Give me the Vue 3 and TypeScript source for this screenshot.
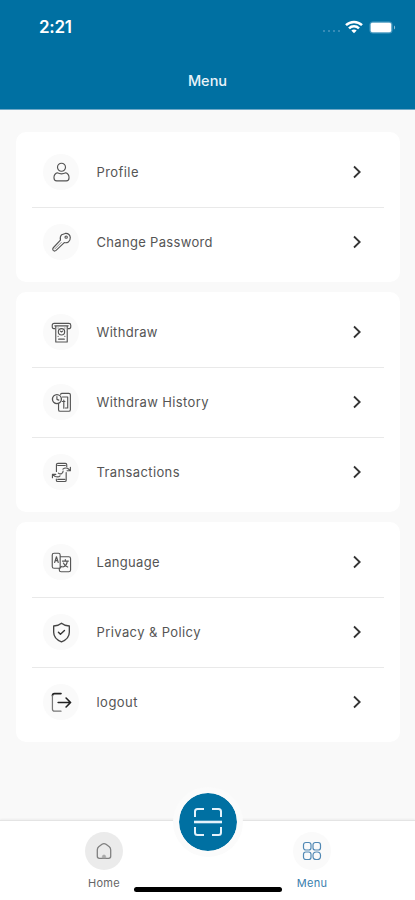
<script setup lang="ts">
interface MenuItem {
  label: string
  icon: string
  width: number
}

const groups: MenuItem[][] = [
  [
    { label: 'Profile', icon: 'profile', width: 42 },
    { label: 'Change Password', icon: 'key', width: 116 },
  ],
  [
    { label: 'Withdraw', icon: 'withdraw', width: 61 },
    { label: 'Withdraw History', icon: 'history', width: 112 },
    { label: 'Transactions', icon: 'transactions', width: 83 },
  ],
  [
    { label: 'Language', icon: 'language', width: 63 },
    { label: 'Privacy & Policy', icon: 'shield', width: 104 },
    { label: 'logout', icon: 'logout', width: 41 },
  ],
]
</script>

<template>
  <div class="screen">
    <header class="header">
      <div class="status">
        <span class="time">2:21</span>
        <div class="indicators">
          <span class="dots"><i v-for="n in 4" :key="n"></i></span>
          <svg class="wifi" viewBox="0 0 18 14" fill="none" stroke="#fff" stroke-width="2.5">
            <path d="M1 5.1C5.5.8 12.5.8 17 5.1" />
            <path d="M4 8.3C6.8 5.5 11.2 5.5 14 8.3" />
            <path d="M6.3 10.6C7.8 9.1 10.2 9.1 11.7 10.6L9 13.300Z" fill="#fff" stroke="none" />
          </svg>
          <svg class="battery" viewBox="0 0 27 13">
            <rect x=".5" y=".5" width="23" height="12" rx="3.5" fill="#4d9bc1" />
            <rect x="1.700" y="1.700" width="20.500" height="9.600" rx="1.800" fill="#fff" />
            <path d="M25 4.500c1.500.7 1.500 3.300 0 4z" fill="#8bbdd6" />
          </svg>
        </div>
      </div>
      <h1 class="title">Menu</h1>
    </header>

    <main class="content">
      <section v-for="(group, g) in groups" :key="g" class="card">
        <div v-for="item in group" :key="item.label" class="row">
          <span class="bubble">
            <svg class="icon" viewBox="0 0 22 22" fill="none" stroke="#555" stroke-width="1.2" stroke-linecap="round" stroke-linejoin="round">
              <template v-if="item.icon === 'profile'">
                <circle cx="11" cy="5.5" r="4.200" />
                <path d="M6.500 11.300c3 1.500 6 1.500 9 0 2.100.8 3.400 2.800 3.400 5.200 0 2.100-1 3.300-2.900 3.300H6c-1.900 0-2.900-1.200-2.900-3.300 0-2.400 1.300-4.400 3.400-5.200z" />
              </template>
              <template v-else-if="item.icon === 'key'">
                <path d="M11.200 2.800 15 1.500c2.600-.2 4.800 1.500 5.200 4.200.1 2-.7 3.700-2 4.800-1.300.8-2.800 1-4.300.6L5.300 19.300c-1 .8-2.200.8-3 0-.8-.9-.7-1.900.1-2.800l7.500-8.100c-.5-2.200-.1-4.200 1.300-5.600z" />
                <path d="M4 17.700 10.700 11" stroke-width=".7" />
                <circle cx="15.900" cy="5.400" r="1.200" />
              </template>
              <template v-else-if="item.icon === 'withdraw'">
                <path d="M4 7H3C1.800 7 1.300 6.300 1.300 5V3.500c0-1.300.7-2 2-2h15.400c1.300 0 2 .7 2 2V5c0 1.300-.5 2-1.700 2h-1" />
                <path d="M4 4h14M5 4v17h12V4" />
                <circle cx="11" cy="10.300" r="3.300" />
                <path d="M9.800 9.500l1.200 1 1.200-1M7.400 6.300h.1M14.500 6.300h.1M8 18h6M7.400 15h.1M14.500 15h.1" />
              </template>
              <template v-else-if="item.icon === 'history'">
                <path d="M10 2.400c.3-.7.900-1 1.600-1h7c1 0 1.700.6 1.700 1.600v15.500c0 1-.7 1.700-1.700 1.700h-9c-1 0-1.700-.7-1.700-1.700v-6" />
                <circle cx="6.200" cy="7.400" r="4.700" stroke-width="1.400" />
                <path d="M6.200 4.700v3l2 .8M12 5.200h5.500M17.500 5.200v11.600H15M13.400 8.500v8.500M11.800 10h2.800" />
              </template>
              <template v-else-if="item.icon === 'transactions'">
                <path d="M5.700 10V3c0-1 .6-1.600 1.600-1.600h7.700c1 0 1.500.6 1.500 1.600v2M15.900 11v8c0 .8-.5 1.400-1.400 1.400H7c-.8 0-1.400-.6-1.400-1.400v-1M7 3.700h8M7 18.200h7.500" />
                <path d="M12.500 7.500c1.300-1.300 3-1.500 4.800-1l2.700 2.300M20.300 5.500v3.700h-3.500M9.500 14.500c-1.300 1.300-3.200 1.300-5 .7l-2.800-1.900M1.500 16.500v-3.500H5" />
                <path d="M12.700 9.500c0 2.500-2.800 4-5 2.200" />
              </template>
              <template v-else-if="item.icon === 'language'">
                <path d="M8.500 17H3.200c-1.200 0-1.900-.7-1.900-1.900V3.200c0-1.200.7-1.900 1.900-1.900h4.500c1.200 0 1.900.7 1.900 1.900V17zM9.600 5h9c1.200 0 1.900.6 1.900 1.800v12c0 1.200-.7 1.900-1.900 1.900h-8c-1.200 0-1.900-.7-1.900-1.900V17l3-2" />
                <path d="m3.800 11 1.900-6 1.900 6M4.500 9h2.400" />
                <path d="M12 9.500h6.200M15 8v1.500M13 11.500c1 2.500 2.500 3.600 4.500 4.300M17 9.800c-.3 3-2 5-4.500 6" />
              </template>
              <template v-else-if="item.icon === 'shield'">
                <path stroke="#444" stroke-width="1.400" d="M11 1.200c2 1.800 4.700 2.700 8.200 3v6.600c0 4.700-3 8-8.200 10.100-5.200-2.100-8.200-5.400-8.200-10.100V4.200c3.500-.3 6.200-1.200 8.200-3z" />
                <path stroke="#333" stroke-width="1.500" d="m7.800 10.700 2.100 2.100 4.200-3.800" />
              </template>
              <template v-else>
                <path stroke="#222" stroke-width="1.700" d="M10.500 1.700H3.700c-1.400 0-2.200.8-2.200 2.200" />
                <path stroke="#777" stroke-width="1.300" d="M1.500 3.900v13.900c0 1.500.8 2.300 2.200 2.300h6.800" />
                <path stroke="#222" stroke-width="1.700" d="M7.500 11h13M15.800 6.300l4.700 4.700-4.700 4.700" />
              </template>
            </svg>
          </span>
          <svg class="label" :width="item.width" height="22">
            <text x=".5" y="15.5" :textLength="item.width">{{ item.label }}</text>
          </svg>
          <svg class="chevron" viewBox="0 0 10 16" fill="none" stroke="#333" stroke-width="1.800">
            <path d="m2 2.500 5.700 5.500L2 13.500" />
          </svg>
        </div>
      </section>
    </main>

    <nav class="tabs">
      <div class="tab">
        <span class="tab-bubble home-bubble">
          <svg width="18" height="18" viewBox="0 0 18 18" fill="none" stroke="#808080" stroke-width="1.300" stroke-linejoin="round">
            <path d="M2.300 8c0-1.300.4-2.500 1.400-3.300L7 2.300c1.200-.9 2.800-.9 4 0l3.300 2.400c1 .8 1.400 2 1.400 3.300v6.200c0 1.300-.8 2.100-2.100 2.100H4.400c-1.300 0-2.100-.8-2.100-2.100z" />
            <path d="M7.300 16v-1.500c0-2 3.400-2 3.400 0V16z" fill="#aaa" stroke="#aaa" stroke-width=".6" />
          </svg>
        </span>
        <span class="tab-label">Home</span>
      </div>
      <div class="tab active">
        <span class="tab-bubble">
          <svg width="20" height="20" viewBox="0 0 20 20" fill="none" stroke="#5088b4" stroke-width="1.200">
            <rect x="1.500" y="1.500" width="7.500" height="7.500" rx="2.300" />
            <rect x="11" y="1.500" width="7.500" height="7.500" rx="2.300" />
            <rect x="1.500" y="11" width="7.500" height="7.500" rx="2.300" />
            <rect x="11" y="11" width="7.500" height="7.500" rx="3.300" />
          </svg>
        </span>
        <span class="tab-label">Menu</span>
      </div>
      <div class="scan">
        <svg width="30" height="30" viewBox="0 0 30 30" fill="none" stroke="#e4f2fb" stroke-width="2">
          <path d="M2 10V4.500C2 3 3 2 4.500 2H11M19 2h6.500C27 2 28 3 28 4.500V10M2 20v5.500C2 27 3 28 4.500 28H11M19 28h6.500c1.500 0 2.500-1 2.500-2.500V20" />
          <path d="M1 15h28" stroke-width="2.600" />
        </svg>
      </div>
      <div class="home-indicator"></div>
    </nav>
  </div>
</template>

<style>
body {
  margin: 0;
}
</style>

<style scoped>
.screen {
  width: 415px;
  height: 900px;
  display: flex;
  flex-direction: column;
  background: #f9f9f9;
  font-family: Inter, sans-serif;
  overflow: hidden;
}
.header {
  box-sizing: border-box;
  height: 110px;
  flex: none;
  background: #0070a2;
  border-bottom: 1px solid #70a9c7;
  color: #fff;
}
.status {
  height: 54px;
  box-sizing: border-box;
  display: flex;
  align-items: center;
  justify-content: space-between;
  padding: 0 19px 0 39px;
}
.time {
  font-size: 17px;
  font-weight: 600;
  letter-spacing: -0.3px;
}
.indicators {
  display: flex;
  align-items: center;
}
.dots {
  display: flex;
  gap: 3px;
  padding-top: 8px;
  margin-right: 5px;
}
.dots i {
  width: 2px;
  height: 2px;
  border-radius: 1px;
  background: #4a96be;
}
.wifi {
  width: 18px;
  height: 14px;
  margin-right: 6px;
}
.battery {
  width: 27px;
  height: 13px;
}
.title {
  margin: 0;
  height: 54px;
  line-height: 53px;
  text-align: center;
  font-size: 14.5px;
  font-weight: 500;
  color: #e9f3f9;
}
.content {
  flex: 1;
  display: flex;
  flex-direction: column;
  gap: 10px;
  padding: 22px 15px 0 16px;
}
.card {
  background: #fff;
  border-radius: 10px;
  padding: 5px 16px;
}
.row {
  box-sizing: border-box;
  height: 70px;
  display: flex;
  align-items: center;
  padding: 0 22px 0 11px;
}
.row + .row {
  border-top: 1px solid #e9e9e9;
  padding-bottom: 1px;
}
.bubble {
  width: 36px;
  height: 36px;
  border-radius: 50%;
  background: #fafafa;
  display: flex;
  align-items: center;
  justify-content: center;
  margin-right: 17px;
}
.icon {
  width: 21px;
  height: 21px;
}
.label {
  overflow: visible;
  margin-right: auto;
}
.label text {
  font-size: 13px;
  fill: #555;
}
.chevron {
  width: 10px;
  height: 16px;
}
.tabs {
  position: relative;
  box-sizing: border-box;
  height: 80px;
  flex: none;
  display: flex;
  justify-content: space-between;
  padding: 11px 73px 0 74px;
  background: #fff;
  border-top: 1px solid #e4e4e4;
  box-shadow: 0 -1px 2px rgba(0, 0, 0, 0.05);
}
.tab {
  width: 60px;
  display: flex;
  flex-direction: column;
  align-items: center;
  color: #666;
}
.tab-bubble {
  width: 38px;
  height: 38px;
  border-radius: 50%;
  background: #fafafa;
  display: flex;
  align-items: center;
  justify-content: center;
}
.home-bubble {
  background: #ebebeb;
}
.tab-label {
  font-size: 11px;
  line-height: 14px;
  margin-top: 6px;
  letter-spacing: 0.3px;
}
.active {
  color: #397ead;
}
.scan {
  position: absolute;
  left: 173px;
  top: -34px;
  width: 58px;
  height: 58px;
  border: 6px solid #fbfbfb;
  border-radius: 50%;
  background: #0070a2;
  background-clip: padding-box;
  display: flex;
  align-items: center;
  justify-content: center;
}
.home-indicator {
  position: absolute;
  left: 134px;
  top: 66px;
  width: 148px;
  height: 5px;
  border-radius: 3px;
  background: #000;
}
</style>
